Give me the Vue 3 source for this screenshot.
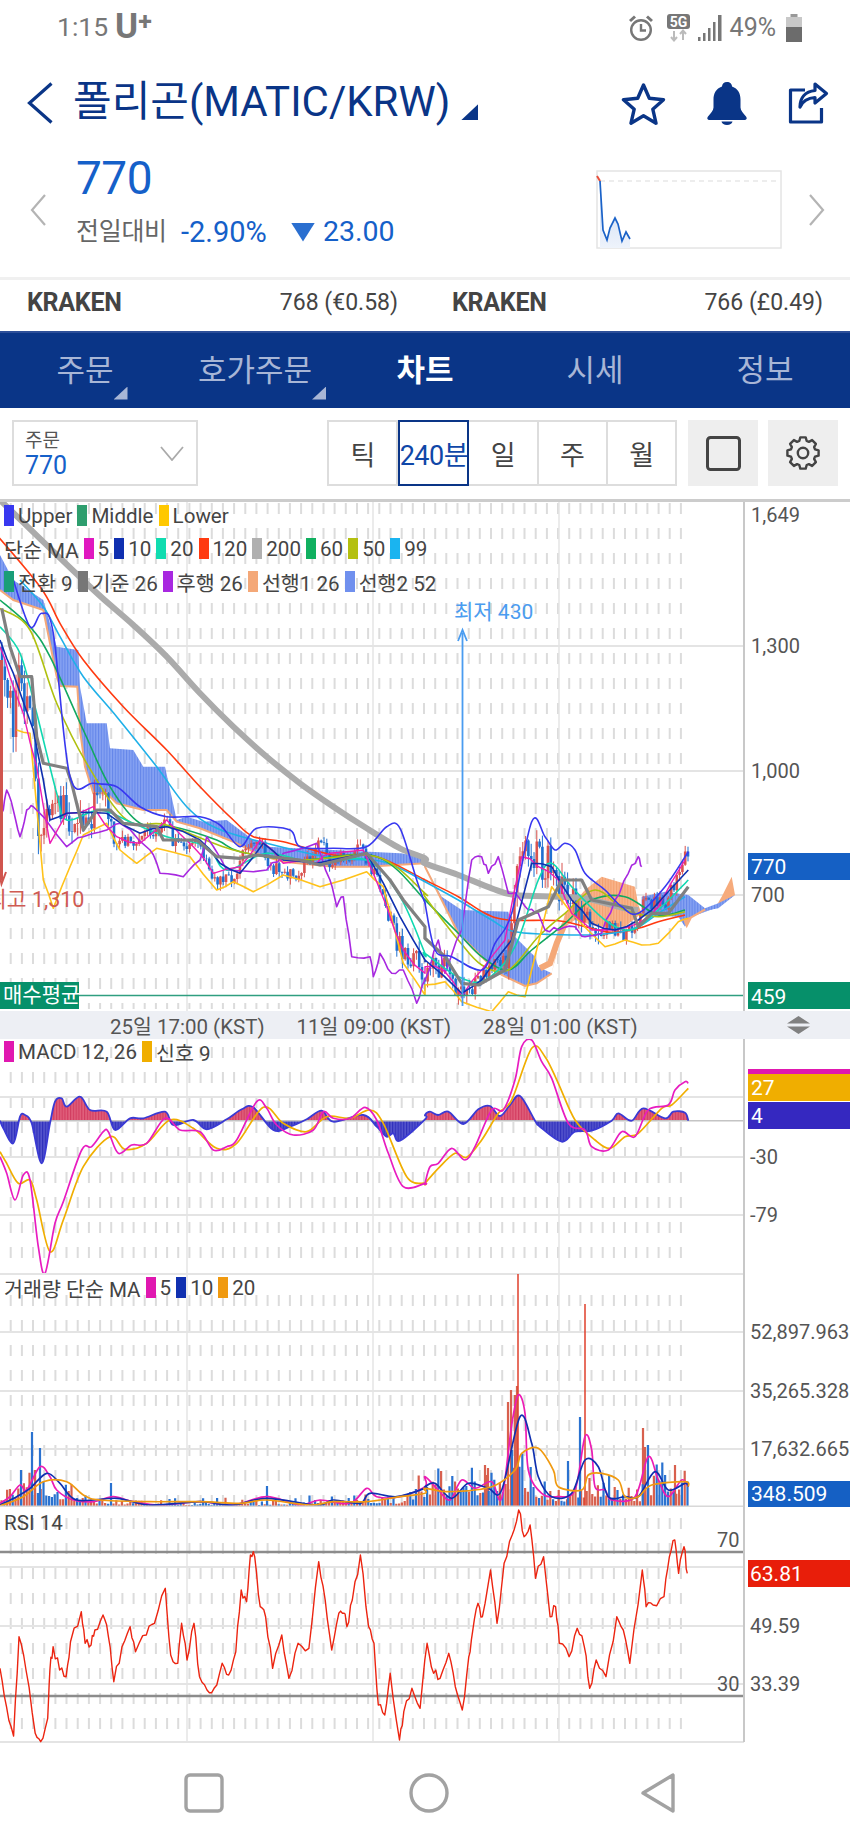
<script setup>
function mulberry(a) {
  return () => {
    a |= 0; a = (a + 0x6d2b79f5) | 0;
    let t = Math.imul(a ^ (a >>> 15), 1 | a);
    t = (t + Math.imul(t ^ (t >>> 7), 61 | t)) ^ t;
    return ((t ^ (t >>> 14)) >>> 0) / 4294967296;
  };
}
const rnd = mulberry(20210511);

const mapTo = (ox, oy, sx = 3, sy = 3) => (arr) => arr.map(([x, y]) => [ox + x / sx, oy + y / sy]);
const z3 = mapTo(0, 580);
const z4 = mapTo(425, 580);
const main2 = (a, b) => [...z3(a), ...z4(b)];
const f1 = (n) => n.toFixed(1);

function smooth(p) {
  let d = `M${f1(p[0][0])} ${f1(p[0][1])}`;
  for (let i = 0; i < p.length - 1; i++) {
    const a = p[Math.max(i - 1, 0)], b = p[i], c = p[i + 1], e = p[Math.min(i + 2, p.length - 1)];
    const c1 = [b[0] + (c[0] - a[0]) / 6, b[1] + (c[1] - a[1]) / 6];
    const c2 = [c[0] - (e[0] - b[0]) / 6, c[1] - (e[1] - b[1]) / 6];
    d += `C${f1(c1[0])} ${f1(c1[1])} ${f1(c2[0])} ${f1(c2[1])} ${f1(c[0])} ${f1(c[1])}`;
  }
  return d;
}
function poly(p) {
  return p.map(([x, y], i) => `${i ? 'L' : 'M'}${f1(x)} ${f1(y)}`).join('');
}
function jag(p, n, amp) {
  const out = [];
  for (let i = 0; i < p.length - 1; i++) {
    const [ax, ay] = p[i], [bx, by] = p[i + 1];
    out.push(p[i]);
    for (let k = 1; k < n; k++) {
      const t = k / n;
      out.push([ax + (bx - ax) * t, ay + (by - ay) * t + (rnd() - 0.5) * amp * 2]);
    }
  }
  out.push(p[p.length - 1]);
  return out;
}
function interp(p, x) {
  if (x <= p[0][0]) return p[0][1];
  for (let i = 0; i < p.length - 1; i++) {
    if (x <= p[i + 1][0]) {
      const t = (x - p[i][0]) / (p[i + 1][0] - p[i][0] || 1);
      return p[i][1] + (p[i + 1][1] - p[i][1]) * t;
    }
  }
  return p[p.length - 1][1];
}
const dashes = (y0, y1) => {
  let d = '';
  for (let x = 10.7; x < 684; x += 11.17) d += `M${f1(x)} ${y0}V${y1}`;
  return d;
};

/* gear icon */
const gearPath = (() => {
  const pts = [];
  const cx = 17, cy = 17;
  for (let i = 0; i < 8; i++) {
    const a = (i * Math.PI) / 4 - Math.PI / 2;
    const pol = (r, da) => [cx + r * Math.cos(a + da), cy + r * Math.sin(a + da)];
    pts.push(pol(12.6, -0.3), pol(15.8, -0.17), pol(15.8, 0.17), pol(12.6, 0.3));
  }
  return poly(pts) + 'Z';
})();

/* main panel ------------------------------------------------------- */
const cloudTop1 = [[0, 555], ...z3([[40, 0], [130, 60], [170, 200], [235, 210], [240, 320], [260, 430], [320, 430], [330, 505], [400, 510], [430, 560], [495, 560], [530, 720], [560, 710], [610, 725], [680, 720], [760, 780], [800, 800], [1000, 810], [1200, 820], [1275, 830]])];
const cloudTop1b = z4([[0, 860], [50, 950], [110, 990], [250, 995], [270, 1070], [330, 1130], [340, 1160], [380, 1180]]);
const cloudBot1 = [[0, 590], ...z3([[40, 60], [130, 90], [170, 290], [180, 318], [232, 320], [240, 450], [255, 560], [280, 640], [320, 640], [350, 670], [430, 690], [500, 690], [530, 725], [600, 745], [700, 785], [780, 825], [850, 845], [1000, 860], [1100, 860], [1275, 850]])];
const cloudBot1b = z4([[0, 860], [50, 960], [100, 1060], [180, 1140], [230, 1185], [300, 1218], [335, 1210], [380, 1180]]);
const blue1 = poly([...cloudTop1, ...cloudTop1b, ...[...cloudBot1, ...cloudBot1b].reverse()]) + 'Z';
const blue1Edge = poly([...cloudBot1, ...cloudBot1b]);
const orange1 = poly(z4([[380, 1180], [420, 1000], [480, 930], [530, 890], [630, 920], [640, 975], [650, 1000], [600, 1040], [520, 1040], [450, 1020], [420, 1040], [400, 1100]])) + 'Z';
const orangeEdge = poly(z4([[345, 1165], [375, 1150], [395, 1090], [420, 1030]]));
const blue2 = poly(z4([[650, 950], [720, 935], [790, 945], [840, 985], [870, 985], [800, 1010], [780, 1040], [760, 1010], [650, 1005]])) + 'Z';
const orange2 = poly(z4([[870, 985], [890, 950], [920, 890], [930, 945], [880, 980], [840, 992], [800, 1015], [785, 1045], [775, 1020], [800, 1008], [840, 985]])) + 'Z';
const blue3 = poly(z4([[840, 985], [880, 970], [930, 945], [880, 985], [840, 992]])) + 'Z';

const pricePath = main2(
  [[5, 200], [40, 420], [60, 300], [100, 420], [120, 800], [160, 640], [200, 720], [260, 700], [320, 680], [350, 800], [410, 790], [500, 730], [530, 800], [600, 790], [630, 890], [700, 880], [770, 770], [820, 860], [900, 880], [960, 800], [1000, 850], [1090, 810], [1140, 920], [1200, 1100], [1275, 1180]],
  [[0, 1170], [60, 1170], [115, 1260], [170, 1180], [240, 1130], [280, 820], [320, 830], [380, 860], [420, 960], [470, 980], [520, 1040], [620, 1060], [660, 960], [720, 970], [780, 830]]
);
let rb = '', rw = '', bb = '', bw = '';
{
  let prev = interp(pricePath, 1);
  for (let x = 2; x < 688; x += 2.8) {
    const y = interp(pricePath, x);
    let v = 9;
    if (x < 60) v = 26;
    else if (x < 110) v = 20;
    else if (x > 395 && x < 470) v = 14;
    else if (x > 505 && x < 600) v = 20;
    const c = y + (rnd() - 0.5) * v * 2;
    const up = c < prev;
    const hi = Math.min(prev, c) - rnd() * v * 0.7;
    const lo = Math.max(prev, c) + rnd() * v * 0.7;
    const body = `M${f1(x)} ${f1(prev)}V${f1(c)}`;
    const wick = `M${f1(x)} ${f1(hi)}V${f1(lo)}`;
    if (up) { rb += body; rw += wick; } else { bb += body; bw += wick; }
    prev = c;
  }
}

const mainLines = [
  { c: '#ababab', w: 6, d: smooth([[0, 500], ...z3([[270, 20], [400, 135], [500, 230], [600, 340], [700, 440], [800, 530], [900, 610], [1000, 680], [1100, 745], [1200, 805], [1275, 835]]), ...z4([[0, 850], [100, 885], [200, 925], [270, 945], [400, 950], [480, 955], [600, 985], [640, 990]])]) },
  { c: '#ff3a10', w: 1.6, d: smooth(main2([[-40, -170], [120, 20], [180, 130], [250, 240], [370, 380], [500, 510], [600, 620], [700, 720], [760, 770], [850, 785], [1000, 825], [1130, 830], [1275, 900]], [[0, 900], [100, 950], [180, 1000], [250, 1020], [400, 1022], [480, 1040], [560, 1057], [640, 1045], [700, 1025], [780, 1005]])) },
  { c: '#1fb0e8', w: 1.6, d: smooth(main2([[60, 0], [130, 80], [180, 170], [250, 290], [350, 410], [470, 560], [560, 680], [650, 745], [800, 790], [1000, 835], [1150, 845], [1275, 905]], [[0, 905], [100, 960], [200, 1020], [270, 1055], [440, 1065], [560, 1060], [640, 1040], [700, 1000], [780, 950]])) },
  { c: '#12a860', w: 1.6, d: smooth(main2([[0, 60], [90, 140], [150, 230], [250, 450], [330, 620], [420, 730], [520, 740], [650, 780], [720, 815], [900, 840], [1130, 830], [1275, 960]], [[0, 960], [100, 1060], [170, 1130], [250, 1170], [320, 1110], [420, 1030], [500, 960], [600, 950], [700, 1005], [780, 990]])) },
  { c: '#b0c010', w: 1.6, d: smooth(main2([[0, 85], [90, 150], [170, 370], [260, 550], [380, 720], [500, 735], [700, 810], [900, 840], [1130, 830], [1275, 940]], [[0, 950], [100, 1080], [170, 1155], [250, 1170], [340, 1070], [420, 1000], [510, 930], [600, 990], [700, 1010], [780, 995]])) },
  { c: '#ffc21a', w: 1.6, d: poly(jag(main2([[50, 450], [90, 460], [130, 900], [160, 985], [210, 860], [250, 765], [320, 730], [360, 810], [410, 850], [470, 805], [570, 830], [650, 930], [700, 905], [760, 935], [850, 885], [960, 920], [1100, 875], [1150, 920], [1210, 1150], [1275, 1245]], [[0, 1215], [60, 1205], [110, 1265], [200, 1295], [250, 1235], [300, 1250], [340, 1090], [380, 920], [440, 1000], [540, 1100], [600, 1080], [650, 1095], [700, 1090], [760, 1025], [790, 1015]]), 2, 1)) },
  { c: '#a828e0', w: 1.6, d: poly(jag(main2([[0, 720], [10, 690], [20, 630], [40, 690], [60, 770], [80, 690], [100, 680], [200, 800], [250, 770], [320, 750], [360, 730], [450, 810], [480, 880], [550, 890], [600, 840], [620, 770], [680, 870], [800, 870], [850, 820], [950, 790], [990, 900], [1010, 980], [1030, 950], [1055, 1130], [1110, 1130], [1120, 1190], [1140, 1120], [1175, 1180], [1210, 1170], [1250, 1270], [1275, 1200]], [[0, 1200], [40, 1080], [60, 1180], [110, 1050], [140, 840], [170, 830], [190, 880], [220, 830], [250, 940], [280, 950], [310, 990], [340, 1000], [360, 1050], [400, 1050], [450, 1040], [480, 1070], [530, 1060], [570, 960], [610, 880], [640, 830], [650, 860]]), 3, 3)) },
  { c: '#10d8b0', w: 1.6, d: smooth(main2([[0, 140], [60, 220], [110, 400], [170, 640], [200, 720], [300, 690], [400, 730], [500, 770], [620, 800], [680, 870], [800, 820], [950, 850], [1100, 840], [1200, 950], [1275, 1120]], [[0, 1120], [100, 1190], [180, 1200], [270, 1100], [340, 900], [380, 850], [440, 920], [540, 1020], [620, 1050], [700, 990], [790, 900]])) },
  { c: '#ec1cb4', w: 1.4, d: poly(jag(main2([[0, 200], [30, 290], [70, 400], [110, 560], [150, 790], [200, 700], [280, 680], [350, 770], [420, 790], [500, 720], [580, 800], [640, 880], [720, 860], [780, 780], [850, 850], [950, 850], [990, 820], [1090, 810], [1160, 980], [1210, 1110], [1275, 1180]], [[0, 1160], [60, 1175], [110, 1250], [170, 1170], [240, 1080], [290, 830], [340, 860], [400, 900], [440, 1000], [500, 1050], [570, 1050], [640, 1030], [700, 980], [780, 840]]), 2, 3)) },
  { c: '#1030b0', w: 1.6, d: poly(jag(main2([[0, 180], [40, 280], [100, 450], [130, 600], [150, 720], [200, 700], [320, 700], [420, 760], [500, 740], [600, 780], [660, 850], [720, 880], [790, 790], [850, 840], [950, 850], [1100, 820], [1200, 1010], [1275, 1140]], [[0, 1140], [110, 1240], [170, 1200], [260, 1080], [320, 850], [380, 860], [440, 960], [500, 1030], [570, 1050], [640, 1020], [680, 990], [790, 870]]), 2, 2)) },
  { c: '#808080', w: 3.2, d: poly(main2([[5, 85], [30, 200], [60, 290], [95, 290], [110, 470], [130, 550], [200, 565], [215, 610], [250, 750], [270, 720], [290, 690], [330, 690], [370, 730], [470, 740], [490, 780], [590, 780], [650, 830], [720, 835], [770, 825], [900, 840], [960, 855], [1100, 820], [1170, 900], [1210, 960], [1275, 1040]], [[0, 1075], [60, 1130], [110, 1210], [160, 1215], [240, 1170], [280, 1020], [370, 980], [410, 900], [470, 900], [500, 960], [620, 985], [640, 1040], [680, 1000], [730, 1000], [790, 920]])) },
  { c: '#3838f0', w: 1.6, d: smooth(main2([[40, 0], [90, 140], [125, 100], [160, 160], [210, 590], [280, 610], [350, 620], [420, 680], [500, 710], [600, 710], [660, 735], [720, 800], [770, 745], [870, 750], [900, 800], [1000, 805], [1100, 800], [1160, 740], [1200, 745], [1250, 900], [1275, 970]], [[0, 970], [30, 1110], [80, 1130], [170, 1170], [210, 1090], [260, 1000], [320, 725], [360, 770], [390, 810], [420, 790], [450, 810], [480, 880], [540, 930], [590, 980], [640, 1000], [720, 920], [790, 815]])) },
];

/* macd ------------------------------------------------------------- */
const z5 = mapTo(0, 1020);
const z6 = mapTo(425, 1020);
const macd2 = (a, b) => [...z5(a), ...z6(b)];
const histTop = macd2(
  [[0, 302], [10, 325], [40, 370], [60, 290], [75, 285], [95, 310], [125, 430], [150, 310], [165, 245], [185, 235], [200, 260], [240, 230], [270, 270], [320, 275], [345, 330], [390, 295], [430, 295], [495, 275], [520, 315], [580, 300], [620, 328], [680, 298], [725, 268], [760, 262], [820, 330], [870, 320], [920, 298], [965, 272], [1000, 305], [1090, 285], [1130, 320], [1160, 350], [1180, 340], [1200, 362], [1275, 298]],
  [[0, 285], [15, 275], [40, 285], [70, 275], [115, 312], [160, 268], [195, 258], [225, 288], [255, 255], [285, 228], [330, 302], [345, 320], [410, 365], [450, 335], [500, 332], [560, 302], [580, 280], [620, 302], [655, 265], [720, 295], [745, 275], [780, 278], [790, 302]]
);
const histLine = smooth(histTop);
const histFill = histLine + 'L688 1120.7L0 1120.7Z';
const macdPink = smooth(macd2(
  [[0, 410], [20, 460], [45, 540], [70, 465], [90, 480], [115, 680], [135, 760], [165, 610], [190, 545], [245, 390], [275, 380], [310, 335], [325, 335], [355, 400], [395, 375], [440, 370], [495, 295], [540, 330], [600, 335], [640, 390], [680, 380], [710, 360], [770, 245], [800, 265], [830, 315], [880, 345], [940, 330], [970, 275], [1000, 295], [1050, 295], [1095, 262], [1130, 300], [1165, 400], [1210, 500], [1275, 490]],
  [[0, 490], [15, 440], [40, 430], [80, 385], [120, 420], [150, 380], [200, 270], [235, 270], [270, 180], [290, 80], [320, 60], [350, 125], [380, 175], [430, 310], [480, 330], [500, 380], [550, 390], [590, 335], [630, 350], [670, 270], [730, 255], [750, 210], [780, 185], [790, 190]]
));
const macdOrange = smooth(macd2(
  [[0, 395], [20, 430], [55, 490], [90, 480], [110, 540], [150, 695], [190, 600], [250, 440], [330, 350], [375, 388], [440, 370], [510, 300], [580, 325], [650, 385], [710, 370], [790, 262], [850, 310], [920, 335], [980, 290], [1050, 295], [1110, 270], [1150, 310], [1220, 470], [1275, 490]],
  [[0, 490], [40, 445], [90, 400], [125, 412], [170, 360], [220, 280], [260, 240], [320, 85], [360, 110], [400, 190], [450, 300], [510, 360], [555, 385], [600, 350], [640, 340], [710, 265], [740, 255], [790, 205]]
));

/* volume ----------------------------------------------------------- */
const z7 = mapTo(0, 1270);
const z8 = mapTo(425, 1270);
const vol2 = (a, b) => [...z7(a), ...z8(b)];
const env = [[0, 12], [30, 50], [45, 35], [60, 24], [100, 10], [180, 8], [320, 9], [350, 18], [400, 9], [425, 32], [500, 38], [520, 70], [535, 24], [568, 18], [592, 32], [640, 18], [660, 50], [688, 34]];
let vr = '', vb = '';
for (let x = 1.5; x < 688; x += 2.8) {
  const h = Math.max(2, interp(env, x) * (rnd() * rnd() * 1.1 + 0.35));
  const s = `M${f1(x)} 1508V${f1(1508 - h)}`;
  if (rnd() > 0.5) vr += s; else vb += s;
}
[[508, 1402], [511, 1390], [515, 1395], [517, 1386], [643, 1428], [645, 1447], [675, 1465], [485, 1465], [488, 1468]].forEach(([x, y]) => { vr += `M${x} 1508V${y}`; });
[[32, 1432], [40, 1448], [21, 1470], [111, 1483], [267, 1486], [580, 1417], [648, 1445], [568, 1461], [512, 1450]].forEach(([x, y]) => { vb += `M${x} 1508V${y}`; });
const volLines = [
  { c: '#ec1cb4', d: smooth(vol2([[0, 700], [30, 680], [60, 645], [80, 660], [120, 590], [150, 620], [170, 660], [220, 690], [280, 695], [340, 680], [400, 695], [480, 705], [600, 695], [700, 705], [800, 680], [900, 705], [960, 690], [1050, 700], [1100, 655], [1130, 680], [1200, 680], [1275, 650]], [[0, 620], [40, 660], [75, 690], [110, 630], [150, 655], [200, 635], [230, 685], [260, 465], [280, 375], [300, 430], [310, 600], [350, 670], [400, 680], [450, 660], [480, 500], [500, 540], [510, 650], [540, 660], [560, 690], [630, 680], [670, 560], [700, 630], [730, 680], [770, 630], [790, 650]])) },
  { c: '#1030b0', d: smooth(vol2([[0, 705], [50, 680], [90, 655], [140, 610], [180, 640], [230, 690], [350, 685], [450, 705], [600, 695], [700, 705], [800, 685], [950, 705], [1000, 690], [1080, 700], [1110, 670], [1190, 680], [1275, 655]], [[0, 650], [30, 640], [80, 685], [130, 640], [190, 655], [230, 660], [285, 440], [320, 520], [340, 620], [380, 680], [440, 670], [480, 570], [520, 590], [550, 680], [600, 680], [640, 680], [690, 605], [730, 660], [780, 640], [790, 650]])) },
  { c: '#f09a10', d: smooth(vol2([[0, 708], [70, 680], [130, 635], [200, 635], [250, 675], [300, 690], [450, 695], [600, 695], [720, 700], [800, 690], [930, 705], [1000, 695], [1100, 695], [1200, 680], [1275, 670]], [[0, 655], [70, 665], [200, 650], [270, 600], [290, 550], [340, 535], [385, 600], [400, 650], [470, 660], [490, 615], [530, 610], [580, 630], [600, 680], [640, 680], [680, 645], [780, 635], [790, 650]])) },
];

/* rsi -------------------------------------------------------------- */
const rsiRaw = [[0, 505], [12, 620], [25, 708], [35, 410], [48, 510], [65, 700], [75, 725], [88, 655], [92, 510], [98, 440], [110, 510], [122, 530], [130, 425], [150, 335], [157, 430], [168, 435], [175, 390], [190, 345], [200, 410], [210, 545], [225, 440], [240, 380], [250, 455], [270, 405], [285, 370], [305, 265], [315, 465], [328, 490], [335, 370], [345, 480], [358, 370], [368, 530], [382, 570], [395, 565], [410, 490], [422, 525], [435, 455], [445, 270], [455, 305], [462, 165], [470, 170], [480, 320], [490, 350], [503, 505], [520, 405], [533, 535], [550, 430], [570, 445], [588, 185], [600, 300], [612, 450], [625, 340], [635, 340], [640, 380], [650, 300], [665, 165], [680, 380], [690, 430], [698, 615], [710, 645], [720, 520], [737, 720], [745, 635], [760, 565], [775, 625], [788, 430], [800, 520], [812, 535], [828, 460], [840, 560], [853, 630], [865, 470], [872, 395], [882, 310], [890, 350], [905, 210], [917, 370], [930, 190], [945, 105], [957, 30], [967, 110], [978, 75], [988, 235], [1003, 170], [1015, 350], [1025, 320], [1032, 430], [1050, 470], [1065, 385], [1078, 440], [1088, 565], [1100, 480], [1118, 530], [1138, 350], [1150, 390], [1162, 490], [1185, 210], [1192, 320], [1205, 315], [1225, 290], [1235, 170], [1245, 120], [1252, 220], [1262, 140], [1268, 220]];
const rsiLine = poly(jag(rsiRaw.map(([x, y]) => [x / 1.845, 1500 + y / 3]), 3, 5));

/* labels ----------------------------------------------------------- */
const vertical = [187, 373, 559];
const legendPrice = [{ c: '#3838f0', t: 'Upper' }, { c: '#2e9e6e', t: 'Middle' }, { c: '#ffc800', t: 'Lower' }];
const legendMa = [{ c: '#e018c0', t: '5' }, { c: '#1030b0', t: '10' }, { c: '#10dcb0', t: '20' }, { c: '#ff3a10', t: '120' }, { c: '#b0b0b0', t: '200' }, { c: '#10b060', t: '60' }, { c: '#b4c010', t: '50' }, { c: '#1ab4f0', t: '99' }];
const legendIchi = [{ c: '#1a9e78', t: '전환 9' }, { c: '#777', t: '기준 26' }, { c: '#a828e0', t: '후행 26' }, { c: '#f4a878', t: '선행1 26' }, { c: '#7090ee', t: '선행2 52' }];
const tabs = [{ t: '주문', drop: true }, { t: '호가주문', drop: true }, { t: '차트', active: true }, { t: '시세' }, { t: '정보' }];
const periods = ['틱', '240분', '일', '주', '월'];
</script>

<template>
  <div class="screen">
    <header class="status">
      <div class="status-left">
        <span class="clock">1:15</span>
        <span class="carrier">U<span class="plus">+</span></span>
      </div>
      <div class="status-right">
        <svg width="26" height="28" viewBox="0 0 26 28" fill="none" stroke="#777" stroke-width="2.4">
          <circle cx="13" cy="16" r="9.8" />
          <path d="M13 10v6.5h5" />
          <path d="M2 7l5-4.5M24 7l-5-4.5" stroke-width="3" />
        </svg>
        <svg class="net" width="25" height="28" viewBox="0 0 25 28">
          <rect x="1" y="0" width="23" height="15" rx="3" fill="#777" />
          <text x="12.5" y="12.5" class="net-text" text-anchor="middle">5G</text>
          <path d="M8 17v9M5 23l3 3.5 3-3.5M17 26v-9M14 20l3-3.5 3 3.5" fill="none" stroke="#bbb" stroke-width="2" />
        </svg>
        <svg class="sig" width="26" height="28" viewBox="0 0 26 28" fill="#777">
          <path d="M1 23h2.5v4H1zM6 19h2.5v8H6zM11 14h2.5v13H11zM16 8h2.5v19H16zM21 1h3.5v26H21z" />
        </svg>
        <span class="pct">49%</span>
        <svg class="batt" width="16" height="28" viewBox="0 0 16 28">
          <rect x="4.5" y="0" width="7" height="3" fill="#999" />
          <rect x="0" y="3" width="16" height="10" fill="#c8c8c8" />
          <rect x="0" y="13" width="16" height="15" fill="#6c6c6c" />
        </svg>
      </div>
    </header>

    <div class="title-row">
      <svg class="back" width="26" height="42" viewBox="0 0 26 42" fill="none" stroke="#0a3587" stroke-width="3.2">
        <path d="M24.5 1.5L2.5 21l22 19.5" />
      </svg>
      <h1 class="title">폴리곤(MATIC/KRW)</h1>
      <span class="title-drop"></span>
      <div class="title-actions">
        <svg width="45" height="43" viewBox="0 0 45 43" fill="none" stroke="#0a3587" stroke-width="3.4" stroke-linejoin="round">
          <path d="M22.5 3l5.8 13.3 14.2 1.4-10.7 9.5 3.2 14-12.5-7.4-12.5 7.4 3.2-14L2.5 17.7l14.2-1.4z" />
        </svg>
        <svg width="40" height="43" viewBox="0 0 40 43" fill="#0a3587">
          <path d="M20 0c3 0 5 2 5 4.500c6 2 8.500 7 8.500 13v8c0 3 3 6 5.500 9 1.500 2 .5 3.500-2 3.500H3c-2.500 0-3.500-1.500-2-3.500 2.500-3 5.500-6 5.500-9v-8c0-6 2.500-11 8.500-13C15 2 17 0 20 0z" />
          <path d="M14.500 39.500h11c-.5 2-2.500 3.500-5.500 3.500s-5-1.500-5.500-3.500z" />
        </svg>
        <svg width="41" height="42" viewBox="0 0 41 42" fill="none" stroke="#0a3587" stroke-width="3.2" stroke-linejoin="round">
          <path d="M17 8H2.500v32h31V26" />
          <path d="M27 2l11.500 9.500L27 21v-5.500c-8 .5-12.500 4-15 9.500 0-9 5-15.500 15-16.500z" />
        </svg>
      </div>
    </div>

    <div class="price-row">
      <svg class="nav-chev" width="17" height="32" viewBox="0 0 17 32" fill="none" stroke="#b4b4b4" stroke-width="2.2"><path d="M15 1L2 16l13 15" /></svg>
      <div class="price-main">
        <div class="price">770</div>
        <div class="change">
          <span class="change-label">전일대비</span>
          <span class="change-pct">-2.90%</span>
          <span class="tri"></span>
          <span class="change-val">23.00</span>
        </div>
      </div>
      <svg class="mini" width="186" height="79" viewBox="596 170 186 79">
        <defs>
          <linearGradient id="miniFill" x1="0" y1="0" x2="0" y2="1">
            <stop offset="0" stop-color="#c4d6f2" /><stop offset="1" stop-color="#eef3fb" />
          </linearGradient>
        </defs>
        <rect x="597" y="171" width="184" height="77" fill="#fff" stroke="#e4e4e4" stroke-width="1.5" />
        <path d="M600 181H780" stroke="#dcdcdc" stroke-width="1.2" stroke-dasharray="5 4" />
        <path d="M600 181L603 230L607 240L610 228L615 218L618 224L622 241L626 232L630 239V248H600Z" fill="url(#miniFill)" />
        <path d="M597 176L600 181" stroke="#e8503c" stroke-width="2" fill="none" />
        <path d="M600 181L603 230L607 240L610 228L615 218L618 224L622 241L626 232L630 239" stroke="#1a62c8" stroke-width="1.7" fill="none" />
      </svg>
      <svg class="nav-chev right" width="17" height="32" viewBox="0 0 17 32" fill="none" stroke="#b4b4b4" stroke-width="2.2"><path d="M2 1l13 15L2 31" /></svg>
    </div>

    <div class="exchanges">
      <div class="exchange"><b>KRAKEN</b><span>768 (€0.58)</span></div>
      <div class="exchange"><b>KRAKEN</b><span>766 (£0.49)</span></div>
    </div>

    <nav class="tabs">
      <div v-for="tab in tabs" :key="tab.t" class="tab" :class="{ active: tab.active }">
        <span class="tab-label" :class="{ drop: tab.drop }">{{ tab.t }}</span>
      </div>
    </nav>

    <div class="controls">
      <div class="select">
        <div class="select-text">
          <span class="select-name">주문</span>
          <span class="select-val">770</span>
        </div>
        <svg width="24" height="15" viewBox="0 0 24 15" fill="none" stroke="#aaa" stroke-width="1.8"><path d="M1 1l11 13L23 1" /></svg>
      </div>
      <div class="periods">
        <div v-for="p in periods" :key="p" class="period" :class="{ active: p === '240분' }">{{ p }}</div>
      </div>
      <div class="square">
        <svg width="35" height="35" viewBox="0 0 35 35" fill="none" stroke="#444" stroke-width="3"><rect x="1.500" y="1.500" width="32" height="32" rx="3" /></svg>
      </div>
      <div class="square gear">
        <svg width="34" height="34" viewBox="0 0 34 34" fill="none" stroke="#444" stroke-width="2.400" stroke-linejoin="round">
          <path :d="gearPath" />
          <circle cx="17" cy="17" r="5.200" />
        </svg>
      </div>
    </div>

    <section class="chart">
      <div class="panel panel-main">
        <svg width="850" height="512" viewBox="0 499 850 512">
          <defs>
            <pattern id="kumo" width="2.8" height="10" patternUnits="userSpaceOnUse">
              <rect width="2.8" height="10" fill="#86a2f2" />
              <rect width="1.100" height="10" fill="#6486ea" />
            </pattern>
            <pattern id="kumoOrange" width="2.8" height="10" patternUnits="userSpaceOnUse">
              <rect width="2.8" height="10" fill="#f8b48a" />
              <rect width="1.100" height="10" fill="#f4a070" />
            </pattern>
          </defs>
          <path :d="dashes(503, 1009)" class="dash" />
          <path v-for="y in [646, 771, 895]" :key="y" :d="`M0 ${y}H744`" class="grid" />
          <path v-for="x in vertical" :key="x" :d="`M${x} 500V1011`" class="grid thin" />
          <path :d="blue1" fill="url(#kumo)" />
          <path :d="blue1Edge" class="edge-orange" />
          <path :d="orange1" fill="url(#kumoOrange)" />
          <path :d="orangeEdge" class="edge-orange wide" />
          <path :d="blue2" fill="url(#kumo)" />
          <path :d="orange2" fill="#f6ab7c" />
          <path :d="blue3" fill="url(#kumo)" />
          <path :d="rw" stroke="#d9534f" stroke-width="1" fill="none" />
          <path :d="bw" stroke="#1f6fd0" stroke-width="1" fill="none" />
          <path :d="rb" stroke="#d9534f" stroke-width="2.600" fill="none" />
          <path :d="bb" stroke="#1f6fd0" stroke-width="2.600" fill="none" />
          <path v-for="(l, i) in mainLines" :key="i" :d="l.d" :stroke="l.c" :stroke-width="l.w" fill="none" stroke-linejoin="round" />
          <path d="M1.500 660V880" stroke="#d0554e" stroke-width="3" />
          <path d="M-2 868L1.500 884 6 872" stroke="#d0554e" stroke-width="2" fill="none" />
          <text x="-13" y="907" class="t-high">최고 1,310</text>
          <path d="M462.500 1006V633" stroke="#4a9cf0" stroke-width="1.800" />
          <path d="M458 641L462.500 630 467 641" stroke="#4a9cf0" stroke-width="1.800" fill="none" />
          <text x="454" y="619" class="t-low">최저 430</text>
          <path d="M79 995.500H744" stroke="#2f9e80" stroke-width="1.600" />
          <rect x="0" y="982" width="79" height="27" fill="#06906a" />
          <text x="3" y="1002" class="t-box">매수평균</text>
          <path d="M744 499V1011" class="axis" />
          <text x="751" y="522" class="t-axis">1,649</text>
          <text x="751" y="653" class="t-axis">1,300</text>
          <text x="751" y="778" class="t-axis">1,000</text>
          <text x="751" y="902" class="t-axis">700</text>
          <rect x="748" y="853" width="102" height="27" fill="#1560c4" />
          <text x="751" y="874" class="t-box">770</text>
          <rect x="748" y="982" width="102" height="27" fill="#06906a" />
          <text x="751" y="1004" class="t-box">459</text>
        </svg>
        <div class="legends">
          <div class="legend">
            <template v-for="l in legendPrice" :key="l.t"><i :style="{ background: l.c }"></i><span>{{ l.t }}</span></template>
          </div>
          <div class="legend">
            <span>단순 MA</span>
            <template v-for="l in legendMa" :key="l.t"><i :style="{ background: l.c }"></i><span>{{ l.t }}</span></template>
          </div>
          <div class="legend">
            <template v-for="l in legendIchi" :key="l.t"><i :style="{ background: l.c }"></i><span>{{ l.t }}</span></template>
          </div>
        </div>
      </div>

      <div class="timebar">
        <span class="time-labels">
          <span>25일 17:00 (KST)</span>
          <span>11일 09:00 (KST)</span>
          <span>28일 01:00 (KST)</span>
        </span>
        <svg class="handle" width="23" height="18" viewBox="0 0 23 18" fill="#808080">
          <path d="M11.500 0L23 7.500H0zM0 10.500h23L11.500 18z" />
        </svg>
      </div>

      <div class="panel panel-macd">
        <svg width="850" height="234" viewBox="0 1039 850 234">
          <defs>
            <pattern id="histUp" width="2.8" height="10" patternUnits="userSpaceOnUse">
              <rect width="2.8" height="10" fill="#e0607c" />
              <rect width="1.200" height="10" fill="#d23c60" />
            </pattern>
            <pattern id="histDn" width="2.8" height="10" patternUnits="userSpaceOnUse">
              <rect width="2.8" height="10" fill="#5454cc" />
              <rect width="1.200" height="10" fill="#3030bc" />
            </pattern>
            <clipPath id="macdUp"><rect x="0" y="1039" width="744" height="81.700" /></clipPath>
            <clipPath id="macdDn"><rect x="0" y="1120.700" width="744" height="100" /></clipPath>
          </defs>
          <path :d="dashes(1047, 1272)" class="dash" />
          <path v-for="y in [1097, 1157, 1215]" :key="y" :d="`M0 ${y}H744`" class="grid" />
          <path v-for="x in vertical" :key="x" :d="`M${x} 1039V1273`" class="grid thin" />
          <path :d="histFill" fill="url(#histUp)" clip-path="url(#macdUp)" />
          <path :d="histFill" fill="url(#histDn)" clip-path="url(#macdDn)" />
          <path d="M0 1120.700H744" stroke="#c4c4c4" stroke-width="1.500" />
          <path :d="histLine" fill="none" stroke="#3a3ad4" stroke-width="1.800" />
          <path :d="macdOrange" fill="none" stroke="#f0ae00" stroke-width="1.700" />
          <path :d="macdPink" fill="none" stroke="#e81cc0" stroke-width="1.700" stroke-linejoin="round" />
          <path d="M744 1039V1273" class="axis" />
          <rect x="748" y="1069" width="102" height="5" fill="#e018b0" />
          <rect x="748" y="1074" width="102" height="27" fill="#f0ae00" />
          <text x="751" y="1095" class="t-box">27</text>
          <rect x="748" y="1102" width="102" height="27" fill="#3528c0" />
          <text x="751" y="1123" class="t-box">4</text>
          <text x="750" y="1164" class="t-axis">-30</text>
          <text x="750" y="1222" class="t-axis">-79</text>
        </svg>
        <div class="legends">
          <div class="legend">
            <i style="background:#e018b0"></i><span>MACD 12, 26</span>
            <i style="background:#f0ae00"></i><span>신호 9</span>
          </div>
        </div>
      </div>

      <div class="panel panel-vol">
        <svg width="850" height="234" viewBox="0 1273 850 234">
          <path :d="dashes(1295, 1507)" class="dash" />
          <path v-for="y in [1274, 1332, 1391, 1449]" :key="y" :d="`M0 ${y}H744`" class="grid" />
          <path v-for="x in vertical" :key="x" :d="`M${x} 1273V1507`" class="grid thin" />
          <path :d="vr" stroke="#d8604e" stroke-width="2.200" fill="none" />
          <path :d="vb" stroke="#2a72d0" stroke-width="2.200" fill="none" />
          <path d="M518 1507.500V1274M585 1507.500V1304" stroke="#e0402c" stroke-width="1.500" fill="none" />
          <path v-for="l in volLines" :key="l.c" :d="l.d" :stroke="l.c" fill="none" stroke-width="1.700" stroke-linejoin="round" />
          <path d="M0 1506.500H744" stroke="#d8d8d8" stroke-width="2" />
          <path d="M744 1273V1507" class="axis" />
          <text x="750" y="1339" class="t-axis">52,897.963</text>
          <text x="750" y="1398" class="t-axis">35,265.328</text>
          <text x="750" y="1456" class="t-axis">17,632.665</text>
          <rect x="748" y="1481" width="102" height="26" fill="#1560c4" />
          <text x="751" y="1501" class="t-box">348.509</text>
        </svg>
        <div class="legends">
          <div class="legend vol">
            <span>거래량 단순 MA</span>
            <i style="background:#e018b0"></i><span>5</span>
            <i style="background:#1030b0"></i><span>10</span>
            <i style="background:#f09a10"></i><span>20</span>
          </div>
        </div>
      </div>

      <div class="panel panel-rsi">
        <svg width="850" height="236" viewBox="0 1507 850 236">
          <path :d="dashes(1518, 1735)" class="dash" />
          <path v-for="y in [1567, 1626, 1684]" :key="y" :d="`M0 ${y}H744`" class="grid" />
          <path v-for="x in vertical" :key="x" :d="`M${x} 1507V1742`" class="grid thin" />
          <path d="M0 1552H744M0 1696H744" stroke="#8c8c8c" stroke-width="2.600" />
          <path d="M0 1742H744" class="grid" />
          <path :d="rsiLine" fill="none" stroke="#ec2410" stroke-width="1.400" stroke-linejoin="round" />
          <path d="M744 1507V1742" class="axis" />
          <text x="717" y="1547" class="t-axis">70</text>
          <text x="717" y="1691" class="t-axis">30</text>
          <text x="750" y="1633" class="t-axis">49.59</text>
          <text x="750" y="1691" class="t-axis">33.39</text>
          <rect x="748" y="1560" width="102" height="27" fill="#e81e0a" />
          <text x="750" y="1581" class="t-box">63.81</text>
        </svg>
        <div class="legends">
          <div class="legend rsi"><span>RSI 14</span></div>
        </div>
      </div>
    </section>

    <footer class="softkeys">
      <svg width="40" height="40" viewBox="0 0 40 40" fill="none" stroke="#a2a2a2" stroke-width="3.400"><rect x="2" y="2" width="36" height="36" rx="4" /></svg>
      <svg width="40" height="40" viewBox="0 0 40 40" fill="none" stroke="#a2a2a2" stroke-width="3.400"><circle cx="20" cy="20" r="18" /></svg>
      <svg width="36" height="42" viewBox="0 0 36 42" fill="none" stroke="#a2a2a2" stroke-width="3.400" stroke-linejoin="round"><path d="M33 3v36L3 21z" /></svg>
    </footer>
  </div>
</template>

<style scoped>
.screen {
  width: 850px;
  height: 1842px;
  overflow: hidden;
  background: #fff;
  font-family: Roboto, "Noto Sans CJK KR", sans-serif;
  color: #444;
}
.status {
  height: 56px;
  box-sizing: border-box;
  padding: 12px 48px 0 57px;
  display: flex;
  justify-content: space-between;
  align-items: flex-start;
  color: #777;
  font-size: 25px;
  line-height: 30px;
}
.status-left { display: flex; align-items: center; gap: 7px; }
.clock { font-size: 26.5px; }
.carrier { font-weight: 700; font-size: 35px; display: flex; align-items: flex-start; line-height: 30px; }
.plus { font-size: 25px; line-height: 20px; }
.status-right { display: flex; align-items: center; gap: 0; margin-top: 1px; }
.net { margin-left: 12px; }
.sig { margin-left: 6px; }
.pct { margin-left: 7px; }
.batt { margin-left: 10px; }
.net-text { font: 700 14px Roboto, sans-serif; fill: #fff; }

.title-row {
  height: 90px;
  box-sizing: border-box;
  padding-left: 27px;
  padding-top: 26px;
  display: flex;
  align-items: flex-start;
  position: relative;
}
.title {
  margin: -6px 0 0 20px;
  font-size: 42px;
  font-weight: 400;
  line-height: 52px;
  color: #0a3587;
  white-space: nowrap;
}
.title-drop {
  width: 17px;
  height: 16px;
  margin: 22px 0 0 11px;
  background: #0a3587;
  clip-path: polygon(100% 0, 100% 100%, 0 100%);
}
.title-actions {
  margin-left: auto;
  padding-right: 21px;
  display: flex;
  gap: 41px;
  align-items: flex-start;
}

.price-row {
  height: 131px;
  box-sizing: border-box;
  padding: 0 25px 0 30px;
  display: flex;
  align-items: flex-start;
}
.nav-chev { margin-top: 48px; }
.nav-chev.right { margin-left: 26px; }
.price-main { margin-left: 29px; flex: 1; }
.price {
  font-size: 46px;
  line-height: 54px;
  margin-top: 5px;
  color: #1560c9;
  letter-spacing: -0.5px;
}
.change {
  margin-top: 9px;
  display: flex;
  align-items: center;
  font-size: 28.5px;
  line-height: 36px;
  color: #1560c9;
}
.change-label { color: #666; font-size: 25px; width: 105px; letter-spacing: -0.3px; }
.change-pct { width: 110px; font-size: 29px; }
.tri {
  width: 24px;
  height: 19px;
  margin-right: 8px;
  background: #2a6fd0;
  clip-path: polygon(0 0, 100% 0, 50% 100%);
}
.mini { margin-top: 24px; }

.exchanges {
  border-top: 3px solid #f0f0f0;
  height: 54px;
  box-sizing: border-box;
  padding: 6px 27px 0;
  display: flex;
  gap: 54px;
  font-size: 23px;
  line-height: 34px;
  color: #444;
}
.exchange { flex: 1; display: flex; justify-content: space-between; }
.exchange b { font-weight: 700; font-size: 25px; letter-spacing: -0.3px; }

.tabs {
  height: 77px;
  background: #0a3587;
  border-top: 2px solid #2d4f99;
  box-sizing: border-box;
  display: grid;
  grid-template-columns: repeat(5, 170px);
  align-items: center;
  justify-items: center;
  color: #a8b6d6;
  font-size: 31px;
}
.tab.active { color: #fff; font-weight: 700; }
.tab-label { position: relative; display: block; line-height: 40px; }
.tab-label.drop::after {
  content: "";
  position: absolute;
  left: 100%;
  bottom: -9px;
  width: 14px;
  height: 13px;
  background: #a8b6d6;
  clip-path: polygon(100% 0, 100% 100%, 0 100%);
}

.controls {
  height: 91px;
  box-sizing: border-box;
  padding: 12px 12px 0;
  display: flex;
  align-items: flex-start;
}
.select {
  width: 186px;
  height: 66px;
  box-sizing: border-box;
  border: 2px solid #ddd;
  padding: 0 12px 0 11px;
  display: flex;
  justify-content: space-between;
  align-items: center;
}
.select-text { display: flex; flex-direction: column; }
.select-name { font-size: 19px; line-height: 25px; color: #555; }
.select-val { font-size: 25px; line-height: 26px; color: #1560c9; }
.periods {
  margin-left: 129px;
  width: 350px;
  height: 66px;
  box-sizing: border-box;
  border: 2px solid #ddd;
  display: flex;
}
.period {
  flex: 1;
  margin: -2px 0;
  border-right: 2px solid #ddd;
  display: flex;
  align-items: center;
  justify-content: center;
  font-size: 27px;
  color: #444;
  letter-spacing: -0.5px;
  white-space: nowrap;
  overflow: hidden;
}
.period:last-child { border-right: 0; }
.period.active { border: 2px solid #0a3587; color: #0f47a8; }
.square {
  width: 70px;
  height: 66px;
  margin-left: 11px;
  background: #eee;
  display: flex;
  align-items: center;
  justify-content: center;
}
.square.gear { margin-left: 10px; }

.chart { border-top: 3px solid #ccc; }
.panel { position: relative; overflow: hidden; }
.panel svg { display: block; }
.panel-main svg { margin-top: -3px; }
.dash { stroke: #dcdcdc; stroke-width: 2; stroke-dasharray: 11 14; fill: none; }
.grid { stroke: #e4e4e4; stroke-width: 2; fill: none; }
.grid.thin { stroke-width: 1.5; }
.axis { stroke: #c8c8c8; stroke-width: 2; fill: none; }
.edge-orange { fill: none; stroke: #f4a878; stroke-width: 2; }
.edge-orange.wide { stroke-width: 6; }
.t-axis { font: 20px Roboto, sans-serif; fill: #555; }
.t-box { font: 21px Roboto, "Noto Sans CJK KR", sans-serif; fill: #fff; }
.t-high { font: 21.5px Roboto, "Noto Sans CJK KR", sans-serif; fill: #cf5a52; }
.t-low { font: 21px Roboto, "Noto Sans CJK KR", sans-serif; fill: #4a9cf0; }

.legends {
  position: absolute;
  left: 4px;
  top: 3px;
  display: flex;
  flex-direction: column;
}
.panel-main .legends { top: -3px; }
.legend {
  height: 33px;
  display: flex;
  align-items: center;
  font-size: 20.6px;
  color: #444;
  white-space: nowrap;
}
.legend i {
  width: 10px;
  height: 21px;
  margin: 0 4px 0 5px;
  flex: none;
}
.legend i:first-child { margin-left: 0; }
.panel-macd .legends { top: -4px; }
.panel-vol .legends { top: -2px; }
.panel-rsi .legends { top: -1px; }

.timebar {
  height: 28px;
  background: #edeff4;
  display: flex;
  align-items: center;
  font-size: 20.5px;
  color: #555;
  position: relative;
}
.time-labels { margin-left: 110px; display: flex; gap: 32px; white-space: nowrap; }
.handle { margin-left: auto; margin-right: 40px; }

.softkeys {
  height: 97px;
  box-sizing: border-box;
  padding-top: 30px;
  display: flex;
  align-items: flex-start;
}
.softkeys svg:nth-child(1) { margin-left: 184px; }
.softkeys svg:nth-child(2) { margin-left: 185px; }
.softkeys svg:nth-child(3) { margin-left: 191px; margin-top: -1px; }
</style>
